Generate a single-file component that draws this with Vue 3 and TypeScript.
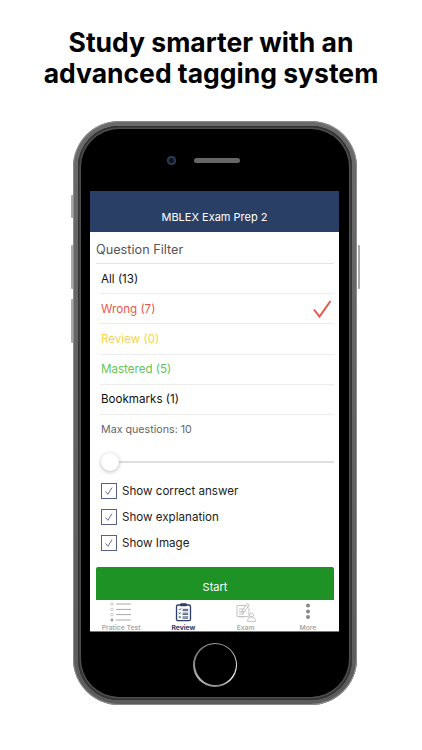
<script setup lang="ts">
const filters = [
  { label: 'All (13)', color: '#111111', checked: false },
  { label: 'Wrong (7)', color: '#e8574a', checked: true },
  { label: 'Review (0)', color: '#f8d548', checked: false },
  { label: 'Mastered (5)', color: '#62c554', checked: false },
  { label: 'Bookmarks (1)', color: '#111111', checked: false },
]

const options = ['Show correct answer', 'Show explanation', 'Show Image']
</script>

<template>
  <div class="page">
    <h1 class="title">Study smarter with an<br />advanced tagging system</h1>

    <div class="phone">
      <span class="side-btn side-btn--mute" />
      <span class="side-btn side-btn--up" />
      <span class="side-btn side-btn--down" />
      <span class="side-btn side-btn--power" />

      <div class="phone__inner">
        <div class="phone__top">
          <span class="camera" />
          <span class="speaker" />
        </div>

        <div class="screen">
          <header class="nav">MBLEX Exam Prep 2</header>

          <main class="content">
            <div class="section-title">Question Filter</div>
            <ul class="filters">
              <li
                v-for="f in filters"
                :key="f.label"
                class="filter"
                :style="{ color: f.color }"
              >
                <span>{{ f.label }}</span>
                <svg v-if="f.checked" class="filter__check" viewBox="0 0 20 20" width="20" height="20">
                  <path d="M2 10.5 L7.5 17.5 L18.5 2" fill="none" stroke="#e8574a" stroke-width="2" />
                </svg>
              </li>
            </ul>

            <div class="max">Max questions: 10</div>

            <div class="slider">
              <span class="slider__thumb" />
            </div>

            <div class="options">
              <label v-for="o in options" :key="o" class="option">
                <span class="option__box">
                  <svg viewBox="0 0 16 16" width="14" height="14">
                    <path d="M4 8.5 L6.8 11.8 L11.5 4" fill="none" stroke="#56608a" stroke-width="1" />
                  </svg>
                </span>
                {{ o }}
              </label>
            </div>

            <button class="start">Start</button>
          </main>

          <nav class="tabs">
            <div class="tab">
              <svg viewBox="0 0 22 20" width="22" height="20" fill="none" stroke="#a9a9a9">
                <circle cx="2" cy="2" r="1.3" stroke-width=".6" />
                <circle cx="2" cy="7.4" r="1.3" stroke-width=".6" />
                <circle cx="2" cy="12.6" r="1.3" stroke-width=".6" />
                <circle cx="2" cy="18" r="1.4" fill="#999" stroke="none" />
                <path d="M6 2h15M6 7.4h15M6 12.6h15M6 18h15" stroke-width="1" />
              </svg>
              <span>Pratice Test</span>
            </div>

            <div class="tab tab--active">
              <svg viewBox="0 0 18 20" width="17" height="20" fill="none" stroke="#2b3f66">
                <rect x="1.6" y="2.6" width="14.8" height="16.6" rx="1.5" stroke-width="1.4" />
                <rect x="5.5" y=".8" width="7" height="3" rx=".8" fill="#2b3f66" stroke="none" />
                <path d="M4 7l1 1 1.5-2M4 10.4l2 2M6 10.4l-2 2M4 14.4l2 2M6 14.4l-2 2" stroke-width=".8" />
                <path d="M8 7.2h6M8 8.6h6M8 11.2h6M8 12.6h6M8 15.2h6M8 16.6h6" stroke-width=".9" />
              </svg>
              <span>Review</span>
            </div>

            <div class="tab">
              <svg viewBox="0 0 20 20" width="20" height="20" fill="none" stroke="#c4c4c4" stroke-width="1">
                <path d="M1 3.5h9l3 3v8H1z" />
                <path d="M3 7h6M3 9.5h6M3 12h5M3 15h5" />
                <path d="M6 9L11 1.5l2.2 1.5L8 10.5 5.8 11.2z" />
                <circle cx="15.5" cy="13" r="2" />
                <path d="M11.5 19.4c0-6 8-6 8 0z" />
              </svg>
              <span>Exam</span>
            </div>

            <div class="tab">
              <svg viewBox="0 0 20 20" width="20" height="20" fill="#8a8a8a">
                <circle cx="10" cy="3.5" r="2" />
                <circle cx="10" cy="9.5" r="2" />
                <circle cx="10" cy="15" r="2" />
              </svg>
              <span>More</span>
            </div>
          </nav>
        </div>

        <div class="phone__bottom">
          <span class="home" />
        </div>
      </div>
    </div>
  </div>
</template>

<style>
html, body { margin: 0; background: #fff; }
</style>

<style scoped>
.page {
  width: 422px;
  height: 750px;
  overflow: hidden;
  background: #fff;
  display: flex;
  flex-direction: column;
  align-items: center;
  font-family: Inter, "Liberation Sans", sans-serif;
}
.title {
  margin: 27px 0 0;
  height: 94px;
  font-size: 26.5px;
  line-height: 31px;
  font-weight: 700;
  color: #000;
  text-align: center;
}
.phone {
  position: relative;
  box-sizing: border-box;
  width: 284px;
  height: 584px;
  margin-left: 8px;
  padding: 5px;
  border-radius: 46px;
  background: linear-gradient(#6a6a6a, #5c5c5c);
  box-shadow: inset 0 0 0 1px #8c8c8c;
}
.phone__inner {
  height: 100%;
  box-sizing: border-box;
  border-radius: 41px;
  background: #000;
  box-shadow: inset 0 0 0 1.5px #333, inset 0 0 0 3px #4d4d4d;
  display: flex;
  flex-direction: column;
  align-items: center;
}
.phone__top {
  height: 65px;
  flex: none;
  display: flex;
  align-items: center;
  gap: 18px;
  padding-top: 4px;
  box-sizing: border-box;
  margin-left: -24px;
}
.camera {
  width: 9px;
  height: 9px;
  border-radius: 50%;
  background: radial-gradient(circle at 50% 50%, #0c1220 25%, #3c4a68 70%, #1a2030);
}
.speaker {
  width: 46px;
  height: 5px;
  border-radius: 3px;
  background: #666;
}
.screen {
  width: 249px;
  height: 441px;
  flex: none;
  margin-left: -1px;
  background: #fff;
  display: flex;
  flex-direction: column;
  overflow: hidden;
  font-family: Inter, "Liberation Sans", sans-serif;
}
.nav {
  height: 41px;
  flex: none;
  box-sizing: border-box;
  padding-top: 20px;
  background: #2a3f66;
  color: #fff;
  font-size: 11px;
  line-height: 13px;
  font-weight: 400;
  text-align: center;
}
.content {
  flex: 1;
  min-height: 0;
  overflow: hidden;
  padding: 0 5px 0 6px;
}
.section-title {
  height: 32px;
  box-sizing: border-box;
  padding-top: 10px;
  font-size: 12.7px;
  line-height: 16px;
  color: #555;
  border-bottom: 1px solid #e6e6e6;
}
.filters {
  list-style: none;
  margin: 0;
  padding: 0 0 0 4px;
}
.filter {
  height: 30.2px;
  box-sizing: border-box;
  padding-left: 1px;
  border-bottom: 1px solid #ececec;
  font-size: 11.6px;
  font-weight: 400;
  display: flex;
  align-items: center;
  justify-content: space-between;
}
.filter__check { margin-right: 2px; margin-top: 1px; }
.max {
  margin: 8px 0 0 5px;
  font-size: 10.7px;
  line-height: 14px;
  color: #666;
}
.slider {
  position: relative;
  height: 2px;
  margin: 24px 0 0 5px;
  background: #dedede;
}
.slider__thumb {
  position: absolute;
  left: 0;
  top: -8px;
  width: 18px;
  height: 18px;
  border-radius: 50%;
  background: #fff;
  box-shadow: 0 1px 4px rgba(0, 0, 0, .28);
}
.options {
  margin: 20px 0 0 5px;
  display: flex;
  flex-direction: column;
  gap: 10px;
}
.option {
  display: flex;
  align-items: center;
  gap: 5px;
  height: 16px;
  font-size: 11.6px;
  color: #222;
}
.option__box {
  width: 16px;
  height: 16px;
  box-sizing: border-box;
  border: 1px solid #56608a;
  display: flex;
  align-items: center;
  justify-content: center;
}
.start {
  display: block;
  width: 238px;
  height: 40px;
  margin-top: 16px;
  padding: 0;
  border: 0;
  border-radius: 2px;
  background: #1f9226;
  color: #fff;
  font: 400 11px Inter, "Liberation Sans", sans-serif;
}
.tabs {
  height: 32px;
  flex: none;
  display: grid;
  grid-template-columns: repeat(4, 62.25px);
  background: #fff;
  border-bottom: 1px solid #777;
  box-sizing: border-box;
}
.tab {
  display: flex;
  flex-direction: column;
  align-items: center;
  font-size: 6.8px;
  line-height: 8px;
  font-weight: 600;
  color: #a9a9a9;
  padding-top: 2px;
  height: 30px;
  gap: 2px;
}
.tab svg { flex: none; }
.tab--active { color: #2a3f66; font-weight: 700; }
.phone__bottom {
  flex: 1;
  display: flex;
  align-items: center;
  justify-content: center;
  margin-top: -3px;
}
.home {
  width: 44px;
  height: 44px;
  border-radius: 50%;
  box-sizing: border-box;
  padding: 1.5px;
  background: conic-gradient(#9a9a9a, #e8e8e8 90deg, #f0f0f0 130deg, #8a8a8a 170deg, #b5b5b5 230deg, #777 300deg, #9a9a9a);
}
.home::before {
  content: "";
  display: block;
  width: 100%;
  height: 100%;
  border-radius: 50%;
  background: #000;
}
.side-btn {
  position: absolute;
  left: -2px;
  width: 2px;
  background: #a9a9a9;
  border-radius: 1px 0 0 1px;
}
.side-btn--mute { top: 74px; height: 23px; }
.side-btn--up { top: 124px; height: 44px; }
.side-btn--down { top: 178px; height: 44px; }
.side-btn--power { left: auto; right: -3px; top: 124px; height: 44px; border-radius: 0 1px 1px 0; }
</style>
